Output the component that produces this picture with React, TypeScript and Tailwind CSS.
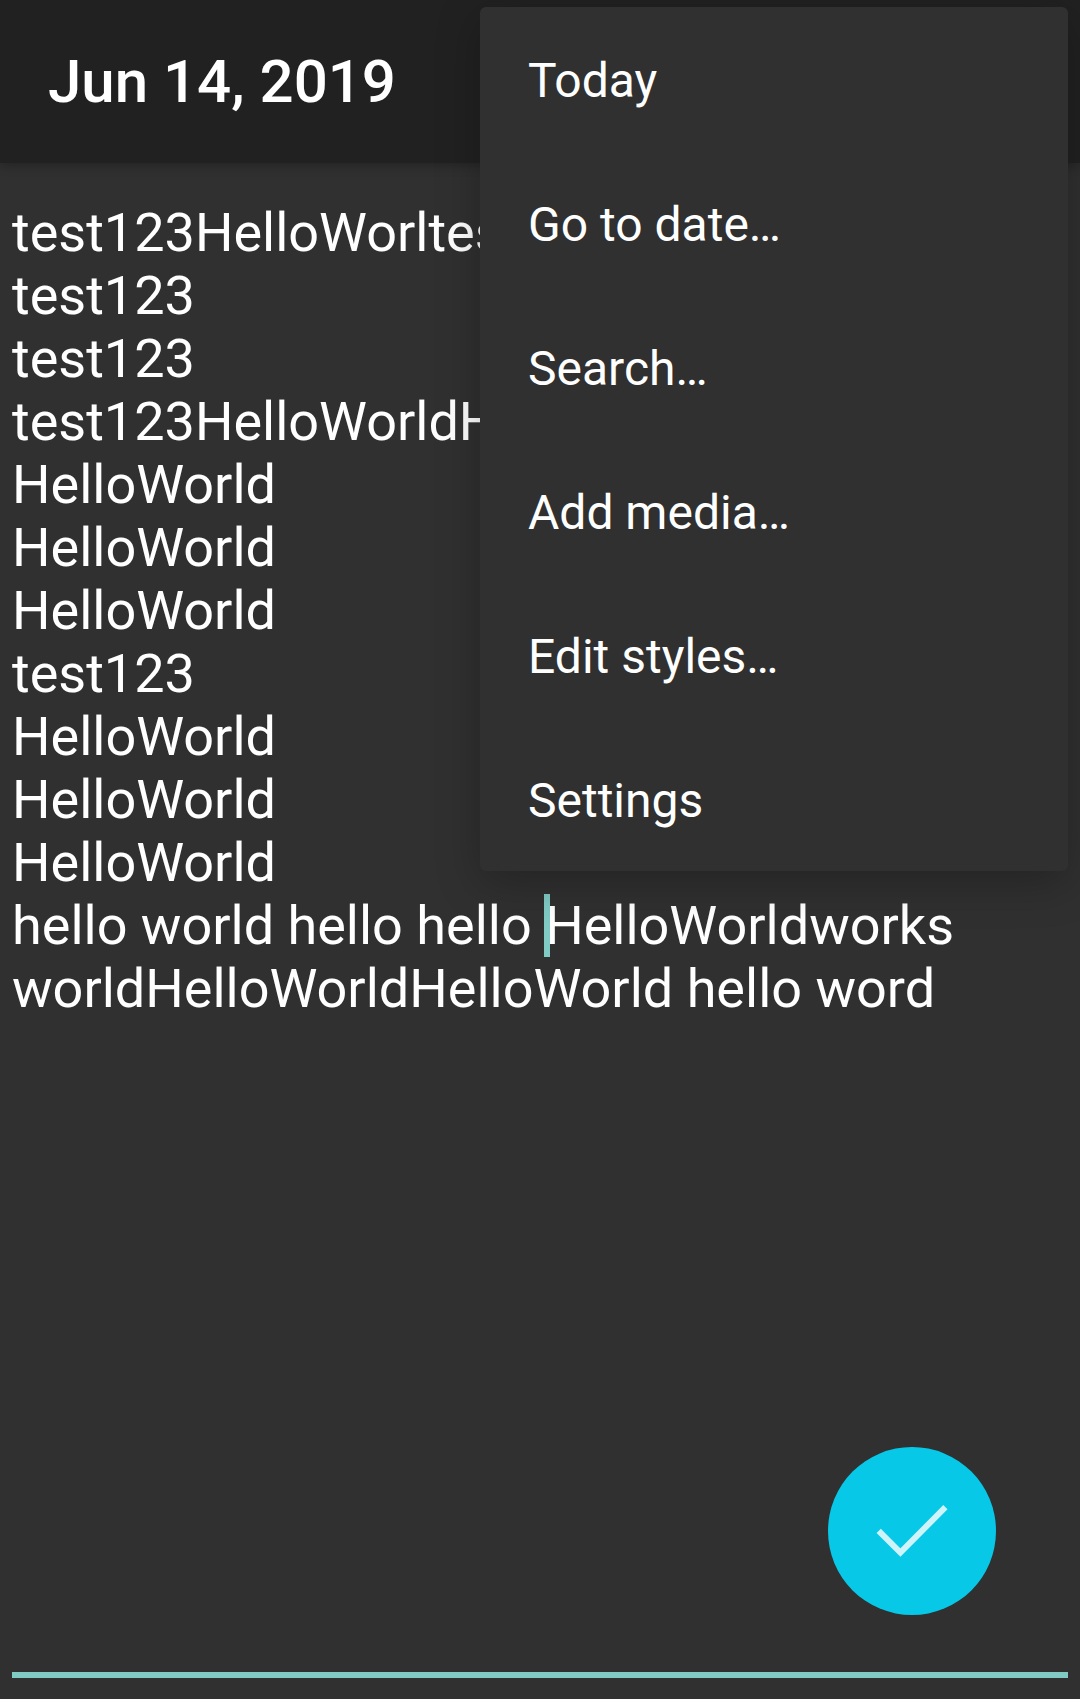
import React from "react";

const entry = [
  "test123HelloWorltest123",
  "test123",
  "test123",
  "test123HelloWorldHelloWorld",
  "HelloWorld",
  "HelloWorld",
  "HelloWorld",
  "test123",
  "HelloWorld",
  "HelloWorld",
  "HelloWorld",
];

const menuItems = ["Today", "Go to date…", "Search…", "Add media…", "Edit styles…", "Settings"];

export default function App() {
  return (
    <div className="relative flex min-h-screen flex-col overflow-hidden bg-[#303030] font-[Roboto,sans-serif] text-white">
      <header className="flex h-[163px] items-center bg-[#212121] px-12 shadow-[0_3px_10px_rgba(0,0,0,0.25)]">
        <h1 className="text-[60px] font-medium leading-[72px]">Jun 14, 2019</h1>
      </header>

      <main className="mx-3 mb-[21px] flex grow flex-col border-b-6 border-[#80cbc4] pt-[38px]">
        <div
          role="textbox"
          aria-multiline="true"
          aria-label="Diary entry"
          contentEditable
          suppressContentEditableWarning
          className="grow whitespace-nowrap text-[54px] leading-[63px] outline-none"
        >
          {entry.map((line, i) => (
            <p key={i}>{line}</p>
          ))}
          <p>
            hello world hello hello{" "}
            <span className="relative">
              HelloWorldworks
              <span className="absolute top-0 -left-px h-[63px] w-[6px] bg-[#80cbc4]" />
            </span>
          </p>
          <p>worldHelloWorldHelloWorld hello word</p>
        </div>
      </main>

      <nav
        aria-label="Options"
        className="absolute top-[7px] right-3 flex w-[588px] flex-col rounded-md bg-[#303030] shadow-[0_12px_44px_rgba(0,0,0,0.25)]"
      >
        {menuItems.map((item) => (
          <button key={item} type="button" className="h-36 px-12 pt-1 text-left text-[48px] leading-[56px]">
            {item}
          </button>
        ))}
      </nav>

      <button
        type="button"
        aria-label="Done"
        className="absolute right-21 bottom-21 flex size-42 items-center justify-center rounded-full bg-[#08c8e8]"
      >
        <svg viewBox="0 0 72 54" className="h-[54px] w-[72px]" fill="none" stroke="#cef4fa" strokeWidth="6">
          <path d="M2.7 26.8 L24.4 48.5 L69.4 3.2" />
        </svg>
      </button>
    </div>
  );
}
